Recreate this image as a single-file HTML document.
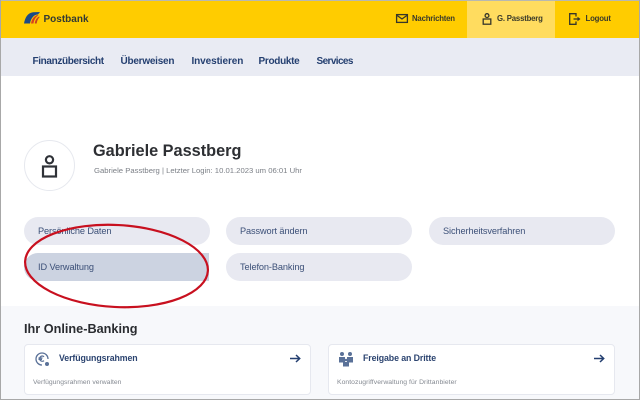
<!DOCTYPE html>
<html lang="de">
<head>
<meta charset="utf-8">
<title>Postbank</title>
<style>
*{box-sizing:border-box;margin:0;padding:0}
html,body{width:640px;height:400px;overflow:hidden;background:#fff}
body{position:relative;font-family:"Liberation Sans",sans-serif}
.a{position:absolute;white-space:nowrap}
.nav{top:55px;font-size:10px;line-height:14px;font-weight:bold;color:#243f70;letter-spacing:-.24px}
.top{top:12.5px;font-size:7.8px;line-height:12px;font-weight:bold;color:#3a3a2a;letter-spacing:-.2px}
.btn{position:absolute;height:28px;width:186px;border-radius:14px;background:#e8e9f1;color:#3c5078;font-size:9.2px;line-height:28px;padding:0 0 0 14px;letter-spacing:-.1px}
.card{position:absolute;top:344px;height:51px;width:287px;background:#fff;border:1px solid #e6e8ef;border-radius:4px}
.ct{position:absolute;top:7px;left:34px;font-size:8.8px;line-height:13px;font-weight:bold;color:#2c4470;letter-spacing:-.1px}
.cs{position:absolute;top:33px;left:8px;font-size:6.8px;line-height:9px;color:#858a92}
svg{position:absolute;overflow:visible}
</style>
</head>
<body>
<div class="a" style="left:0;top:0;width:640px;height:38px;background:#ffcc00"></div>
<div class="a" style="left:467px;top:1px;width:88px;height:37px;background:#ffdc5f"></div>
<div class="a" style="left:0;top:38px;width:640px;height:38px;background:#e9ebf3"></div>
<div class="a" style="left:0;top:306px;width:640px;height:94px;background:#f7f8fb"></div>

<svg style="left:24px;top:12px" width="16" height="12" viewBox="0 0 16 12">
<path d="M0 11.5 C1 6 3.5 1 9 .3 L16 0 L14 2.5 C10 2.5 7 6 6 11.5Z" fill="#1d4a86"/>
<path d="M7 11.5 C7.5 8 9.5 4.5 13 3 L14.5 3.2 C11.5 5 10 8 9.5 11.5Z" fill="#d9421f"/>
<path d="M10.8 11.5 C11 8.5 12.5 6 15 4.5 L15.7 5 C13.8 7 13 9 12.7 11.5Z" fill="#c9401f"/>
</svg>
<div class="a" style="left:43.5px;top:11.5px;font-size:10px;line-height:15px;font-weight:bold;color:#333a33">Postbank</div>

<svg style="left:396px;top:14px" width="12" height="9" viewBox="0 0 12 9" fill="none" stroke="#36362a" stroke-width="1.3">
<rect x=".6" y=".6" width="10.8" height="7.8"/><path d="M1 1.4 L6 5 L11 1.4"/>
</svg>
<div class="a top" style="left:412px">Nachrichten</div>
<svg style="left:482px;top:13px" width="10" height="12" viewBox="0 0 10 12" fill="none" stroke="#36362a" stroke-width="1.3">
<circle cx="5" cy="2.6" r="1.9"/><rect x="1.2" y="6" width="7.6" height="5.2"/>
</svg>
<div class="a top" style="left:497px">G. Passtberg</div>
<svg style="left:569px;top:13px" width="12" height="12" viewBox="0 0 12 12" fill="none" stroke="#36362a" stroke-width="1.3">
<path d="M7 3.5 V.7 H.7 V11.3 H7 V8.5"/><path d="M4.5 6 H9" /><path d="M8.5 3.8 L11.5 6 L8.5 8.2Z" fill="#36362a" stroke="none"/>
</svg>
<div class="a top" style="left:585.5px">Logout</div>

<div class="a nav" style="left:32.5px;letter-spacing:-.36px">Finanzübersicht</div>
<div class="a nav" style="left:120.5px">Überweisen</div>
<div class="a nav" style="left:191.5px;letter-spacing:-.1px">Investieren</div>
<div class="a nav" style="left:258.5px;letter-spacing:-.3px">Produkte</div>
<div class="a nav" style="left:316.5px;letter-spacing:-.6px">Services</div>

<div class="a" style="left:24px;top:140px;width:51px;height:51px;border-radius:50%;background:#fff;border:1px solid #e6e8ee"></div>
<svg style="left:41px;top:155px" width="17" height="23" viewBox="0 0 17 23" fill="none" stroke="#2f3238" stroke-width="2.2">
<circle cx="8.5" cy="4.8" r="3.6"/><rect x="2" y="11.5" width="13" height="10"/>
</svg>
<div class="a" style="left:93px;top:141px;font-size:16.3px;line-height:21px;font-weight:bold;color:#2d2f33">Gabriele Passtberg</div>
<div class="a" style="left:94px;top:165px;font-size:7.7px;line-height:11px;color:#7b7f86">Gabriele Passtberg | Letzter Login: 10.01.2023 um 06:01 Uhr</div>

<div class="btn" style="left:24px;top:217px">Persönliche Daten</div>
<div class="btn" style="left:226px;top:217px">Passwort ändern</div>
<div class="btn" style="left:429px;top:217px">Sicherheitsverfahren</div>
<div class="btn" style="left:24px;top:253px;width:185px;background:#ccd3e1;border-radius:14px 0 0 14px;">ID Verwaltung</div>
<div class="btn" style="left:226px;top:253px">Telefon-Banking</div>

<svg style="left:0;top:0" width="640" height="400">
<ellipse cx="116.5" cy="266" rx="91.5" ry="41" fill="none" stroke="#c8101f" stroke-width="2.2" transform="rotate(3 116.5 266)"/>
</svg>

<div class="a" style="left:24px;top:321px;font-size:12.7px;line-height:17px;font-weight:bold;color:#2a2c30">Ihr Online-Banking</div>

<div class="card" style="left:24px">
<div class="ct">Verfügungsrahmen</div>
<div class="cs">Verfügungsrahmen verwalten</div>
<svg style="left:10px;top:7px" width="15" height="15" viewBox="0 0 15 15" fill="none" stroke="#5a7198" stroke-width="1.3">
<path d="M13 7 A6 6 0 1 0 7 13"/><path d="M9 4.7 A2.6 2.6 0 1 0 9 8.6 M3.5 6 H7.5 M3.5 7.4 H7"/><circle cx="12" cy="12" r="2" fill="#5a7198" stroke="none"/>
</svg>
<svg style="left:265px;top:9px" width="11" height="9" viewBox="0 0 11 9" fill="none" stroke="#243f70" stroke-width="1.5">
<path d="M0 4.5 H9.5 M6 1 L9.7 4.5 L6 8"/>
</svg>
</div>
<div class="card" style="left:328px">
<div class="ct">Freigabe an Dritte</div>
<div class="cs" style="letter-spacing:.05px">Kontozugriffverwaltung für Drittanbieter</div>
<svg style="left:9px;top:7px" width="16" height="15" viewBox="0 0 16 15" fill="#5a7198">
<circle cx="4" cy="2" r="2"/><circle cx="12" cy="2" r="2"/><rect x="1" y="5" width="6" height="5.5"/><rect x="9" y="5" width="6" height="5.5"/><circle cx="8" cy="8" r="1.3"/><rect x="5" y="10" width="6" height="4.5"/>
</svg>
<svg style="left:265px;top:9px" width="11" height="9" viewBox="0 0 11 9" fill="none" stroke="#243f70" stroke-width="1.5">
<path d="M0 4.5 H9.5 M6 1 L9.7 4.5 L6 8"/>
</svg>
</div>

<div class="a" style="left:0;top:0;width:640px;height:1px;background:#b8b8b0"></div>
<div class="a" style="left:0;top:0;width:1px;height:400px;background:#a8a8a8"></div>
<div class="a" style="left:639px;top:0;width:1px;height:400px;background:#a8a8a8"></div>
<div class="a" style="left:0;top:399px;width:640px;height:1px;background:#a8a8a8"></div>
</body>
</html>
